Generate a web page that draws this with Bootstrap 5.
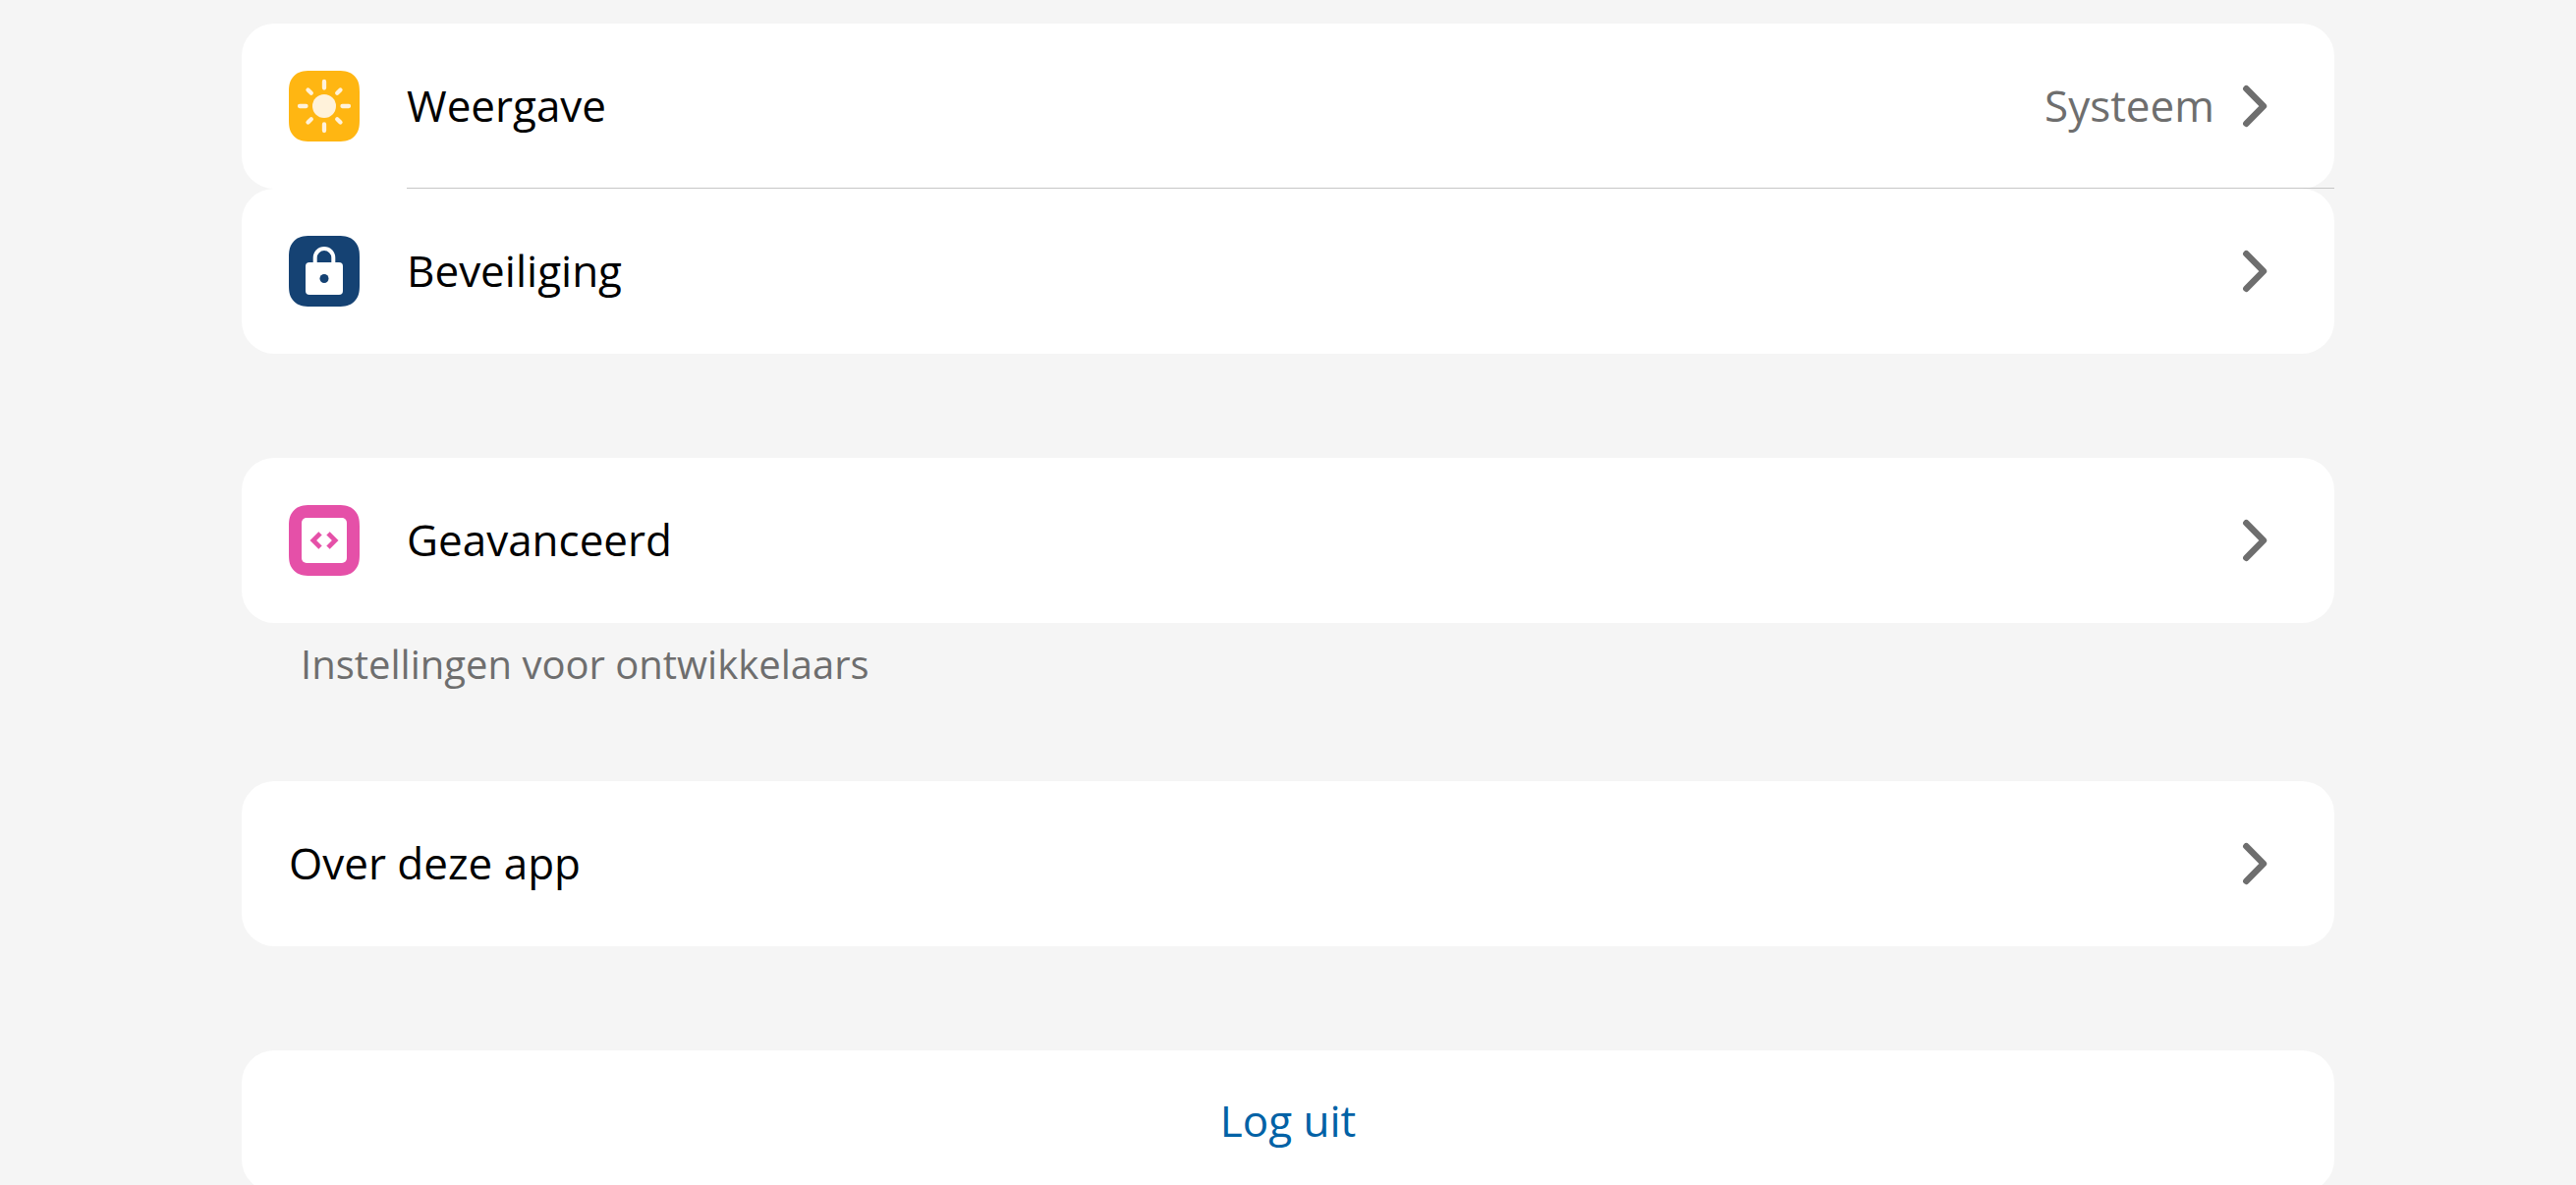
<!DOCTYPE html>
<html lang="nl">
<head>
<meta charset="utf-8">
<meta name="viewport" content="width=device-width, initial-scale=1">
<title>Instellingen</title>
<link rel="stylesheet" href="https://cdn.jsdelivr.net/npm/bootstrap@5.3.0/dist/css/bootstrap.min.css">
<style>
  body { background: #f5f5f5; color: #000; font-family: "Open Sans", "Noto Sans", sans-serif; font-size: 44px; line-height: 60px; }
  .settings { padding: 24px 246px 0; gap: 106px; }
  .tile { background: #fff; border-radius: 33px; color: #000; }
  .tile span { padding-bottom: 3px; }
  .setting { min-height: 168px; padding: 0 48px; }
  .setting-icon { width: 72px; height: 72px; margin-right: 48px; }
  .setting-value { color: #6e6e6e; margin-right: 8px; }
  .chevron { width: 66px; height: 66px; stroke: #6e6e6e; }
  .divider { height: 1px; margin: -1px 0 0 168px; background: #c6c6c6; border: 0; opacity: 1; position: relative; }
  .hint { color: #6e6e6e; font-size: 40px; line-height: 54px; padding: 15px 60px 0; margin-bottom: -14px; }
  .logout { height: 144px; color: #0162a6; }
</style>
</head>
<body>
<svg class="d-none" aria-hidden="true">
  <symbol id="chevron" viewBox="0 0 66 66"><path d="M24.400 15.300l17.500 17.700-17.500 17.700" fill="none" stroke-width="6.600" stroke-linecap="round" stroke-linejoin="round"/></symbol>
  <symbol id="squircle" viewBox="0 0 72 72"><path d="M22 0H50C57.500 0 62.300 .900 66.700 5.300C71.100 9.700 72 14.500 72 22V50C72 57.500 71.100 62.300 66.700 66.700C62.300 71.100 57.500 72 50 72H22C14.500 72 9.700 71.100 5.300 66.700C.900 62.300 0 57.500 0 50V22C0 14.500 .900 9.700 5.300 5.300C9.700 .900 14.500 0 22 0Z"/></symbol>
</svg>
<div class="vh-100 overflow-hidden">
  <main class="settings d-flex flex-column">
    <nav aria-label="Algemeen">
      <a href="#weergave" class="tile setting d-flex align-items-center text-decoration-none">
        <svg class="setting-icon flex-shrink-0" viewBox="0 0 72 72" aria-hidden="true">
          <use href="#squircle" fill="#ffb612"/>
          <circle cx="36" cy="36" r="12" fill="#fff2da"/>
          <path d="M36 11v6.500M36 54.500v6.500M11 36h6.500M54.500 36h6.500M19.500 19.500l3.300 3.300M49.200 49.200l3.300 3.300M52.500 19.500l-3.300 3.300M22.800 49.200l-3.300 3.300" stroke="#fff2da" stroke-width="4.300" stroke-linecap="round"/>
        </svg>
        <span class="flex-grow-1">Weergave</span>
        <span class="setting-value">Systeem</span>
        <svg class="chevron" aria-hidden="true"><use href="#chevron"/></svg>
      </a>
      <hr class="divider">
      <a href="#beveiliging" class="tile setting d-flex align-items-center text-decoration-none">
        <svg class="setting-icon flex-shrink-0" viewBox="0 0 72 72" aria-hidden="true">
          <use href="#squircle" fill="#154273"/>
          <rect x="17" y="27" width="38" height="33" rx="4" fill="#fff"/>
          <path d="M26.700 29v-6.700a9.300 9.300 0 0 1 18.600 0V29" fill="none" stroke="#fff" stroke-width="4"/>
          <circle cx="36" cy="43.500" r="4.500" fill="#154273"/>
        </svg>
        <span class="flex-grow-1">Beveiliging</span>
        <svg class="chevron" aria-hidden="true"><use href="#chevron"/></svg>
      </a>
    </nav>

    <section>
      <a href="#geavanceerd" class="tile setting d-flex align-items-center text-decoration-none">
        <svg class="setting-icon flex-shrink-0" viewBox="0 0 72 72" aria-hidden="true">
          <use href="#squircle" fill="#e550a8"/>
          <rect x="13" y="13" width="46" height="46" rx="5" fill="#fff"/>
          <path d="M30.300 27.500l3 3L27.800 36l5.500 5.500-3 3L21.800 36zM41.700 27.500l-3 3L44.200 36l-5.500 5.500 3 3L50.200 36z" fill="#e550a8" stroke="#e550a8" stroke-width=".6" stroke-linejoin="round"/>
        </svg>
        <span class="flex-grow-1">Geavanceerd</span>
        <svg class="chevron" aria-hidden="true"><use href="#chevron"/></svg>
      </a>
      <p class="hint">Instellingen voor ontwikkelaars</p>
    </section>

    <nav aria-label="Over">
      <a href="#over" class="tile setting d-flex align-items-center text-decoration-none">
        <span class="flex-grow-1">Over deze app</span>
        <svg class="chevron" aria-hidden="true"><use href="#chevron"/></svg>
      </a>
    </nav>

    <button type="button" class="tile logout d-flex align-items-center justify-content-center w-100 border-0"><span>Log uit</span></button>
  </main>
</div>
<script src="https://cdn.jsdelivr.net/npm/bootstrap@5.3.0/dist/js/bootstrap.bundle.min.js"></script>
</body>
</html>
